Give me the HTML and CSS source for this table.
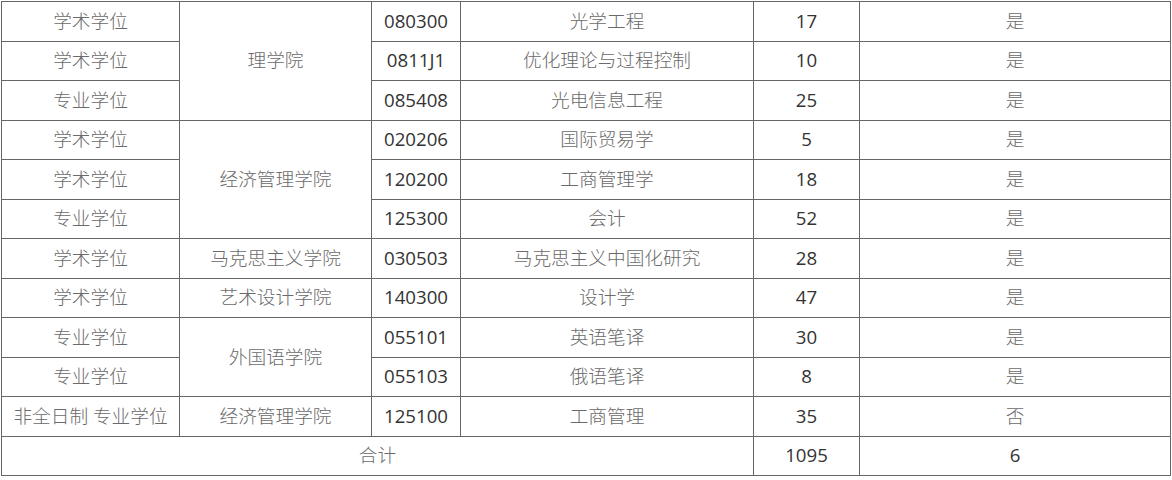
FILE: index.html
```html
<!DOCTYPE html>
<html lang="zh">
<head>
<meta charset="utf-8">
<link rel="stylesheet" href="styles.css">
</head>
<body>
<table class="t">
  <colgroup>
    <col class="c1"><col class="c2"><col class="c3"><col class="c4"><col class="c5"><col class="c6">
  </colgroup>
  <tbody>
    <tr><td>学术学位</td><td rowspan="3">理学院</td><td class="n">080300</td><td>光学工程</td><td class="n">17</td><td>是</td></tr>
    <tr><td>学术学位</td><td class="n">0811J1</td><td>优化理论与过程控制</td><td class="n">10</td><td>是</td></tr>
    <tr><td>专业学位</td><td class="n">085408</td><td>光电信息工程</td><td class="n">25</td><td>是</td></tr>
    <tr><td>学术学位</td><td rowspan="3">经济管理学院</td><td class="n">020206</td><td>国际贸易学</td><td class="n">5</td><td>是</td></tr>
    <tr><td>学术学位</td><td class="n">120200</td><td>工商管理学</td><td class="n">18</td><td>是</td></tr>
    <tr><td>专业学位</td><td class="n">125300</td><td>会计</td><td class="n">52</td><td>是</td></tr>
    <tr><td>学术学位</td><td>马克思主义学院</td><td class="n">030503</td><td>马克思主义中国化研究</td><td class="n">28</td><td>是</td></tr>
    <tr><td>学术学位</td><td>艺术设计学院</td><td class="n">140300</td><td>设计学</td><td class="n">47</td><td>是</td></tr>
    <tr><td>专业学位</td><td rowspan="2">外国语学院</td><td class="n">055101</td><td>英语笔译</td><td class="n">30</td><td>是</td></tr>
    <tr><td>专业学位</td><td class="n">055103</td><td>俄语笔译</td><td class="n">8</td><td>是</td></tr>
    <tr><td>非全日制 专业学位</td><td>经济管理学院</td><td class="n">125100</td><td>工商管理</td><td class="n">35</td><td>否</td></tr>
    <tr><td colspan="4">合计</td><td class="n">1095</td><td class="n">6</td></tr>
  </tbody>
</table>
</body>
</html>
```
FILE: styles.css
```css
html, body {
  margin: 0;
  padding: 0;
  background: #fff;
}
body {
  padding: 1px 0 0 1px;
}
.t {
  border-collapse: collapse;
  table-layout: fixed;
  width: 1170px;
  font-family: "Open Sans", "Noto Sans CJK SC", sans-serif;
  font-size: 18.67px;
}
.c1 { width: 178px; }
.c2 { width: 192px; }
.c3 { width: 89px; }
.c4 { width: 293px; }
.c5 { width: 106px; }
.c6 { width: 311px; }
.t tr { height: 39.5px; }
.t td {
  border: 1px solid #666;
  padding: 0 0 1px;
  text-align: center;
  vertical-align: middle;
  color: #6a6a6a;
  line-height: 24px;
  white-space: nowrap;
  font-weight: 300;
}
.t td.n {
  color: #333;
  font-weight: 400;
}
```
